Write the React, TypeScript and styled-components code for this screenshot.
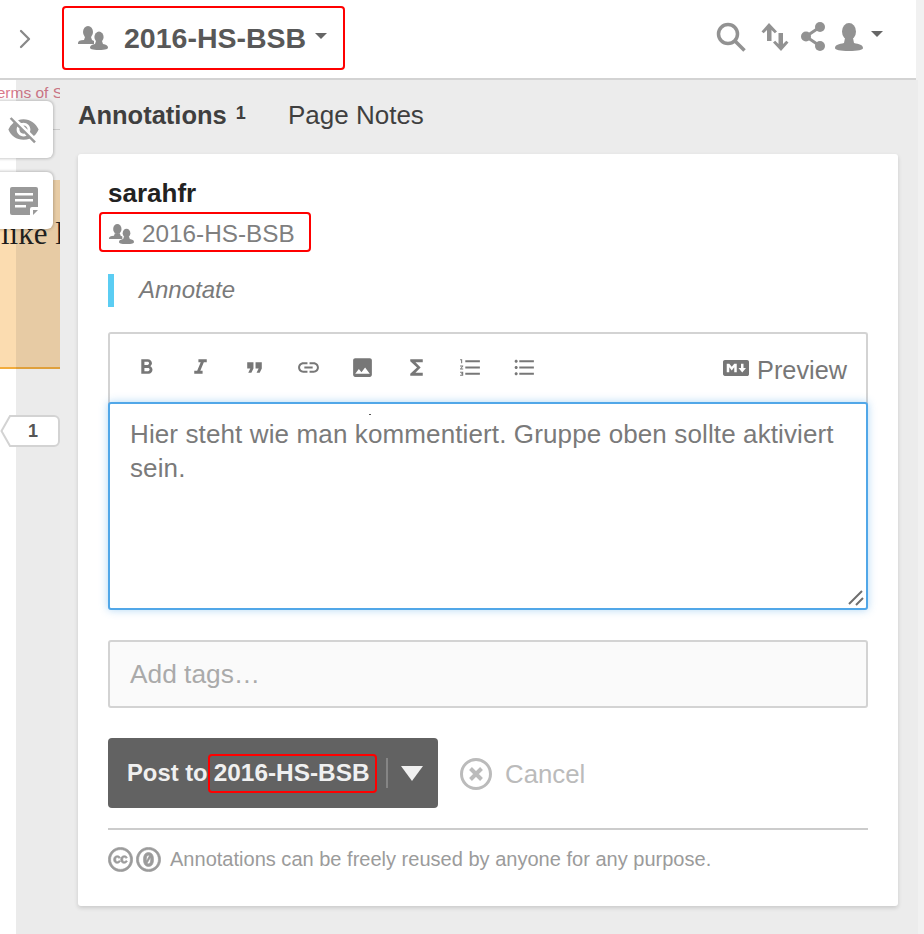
import styled, { createGlobalStyle } from "styled-components";
import {
  MdFormatBold,
  MdFormatItalic,
  MdFormatQuote,
  MdLink,
  MdImage,
  MdFunctions,
  MdFormatListNumbered,
  MdFormatListBulleted,
  MdVisibilityOff,
} from "react-icons/md";
import { FaMarkdown, FaCreativeCommons, FaCreativeCommonsZero } from "react-icons/fa";
import { FiChevronRight } from "react-icons/fi";

const Global = createGlobalStyle`
  html, body { margin: 0; padding: 0; background: #fff; }
  * { box-sizing: border-box; }
  body { font-family: "Liberation Sans", Arial, sans-serif; }
`;

const Page = styled.div`
  width: 924px;
  height: 934px;
  overflow: hidden;
  display: flex;
  flex-direction: column;
  background: #f1f1f1;
`;

const TopBar = styled.div`
  height: 80px;
  width: 916px;
  flex: none;
  background: #fff;
  border-bottom: 2px solid #d3d3d3;
  display: flex;
  align-items: center;
  padding-left: 9px;
`;

const Collapse = styled.div`
  width: 53px;
  display: flex;
  color: #888;
`;

const RedBox = styled.div`
  border: 2px solid #f00;
  border-radius: 4px;
  display: flex;
  align-items: center;
`;

const GroupMenu = styled(RedBox)`
  width: 283px;
  height: 64px;
  margin-top: -2px;
  padding-left: 14px;
  color: #585858;
  font-size: 28.5px;
  font-weight: 700;
  gap: 16px;
`;

const GroupGlyph = styled.span`
  display: flex;
  color: #8c8c8c;
`;

const Caret = styled.span<{ $ml?: number }>`
  width: 0;
  height: 0;
  margin-left: ${(p) => p.$ml || 0}px;
  border-left: 6.5px solid transparent;
  border-right: 6.5px solid transparent;
  border-top: 6px solid #666;
  margin-bottom: 5px;
`;

const TopIcons = styled.div`
  margin-left: auto;
  margin-right: 33px;
  margin-bottom: 5px;
  display: flex;
  align-items: center;
  color: #929292;
`;

const TopIcon = styled.span<{ $ml: number }>`
  display: flex;
  margin-left: ${(p) => p.$ml}px;
`;

const Body = styled.div`
  flex: 1;
  display: flex;
  min-height: 0;
`;

const HostPage = styled.div`
  position: relative;
  width: 60px;
  flex: none;
  overflow: hidden;
  background: #fff;
  font-family: "Liberation Serif", serif;
`;

const Tint = styled.div`
  position: absolute;
  top: 0;
  bottom: 0;
  left: 16px;
  right: 0;
  background: rgba(60, 60, 60, 0.1);
`;

const TermsLine = styled.div`
  height: 50px;
  padding-top: 4px;
  margin-left: -11px;
  white-space: nowrap;
  color: #d97a8c;
  font: 15.5px "Liberation Sans", sans-serif;
  border-bottom: 1px solid #dcdcdc;
`;

const Highlight = styled.div`
  margin-top: 50px;
  height: 189px;
  background: #fbdcb0;
  border-bottom: 2px solid #f2ac3d;
  padding: 34px 0 0 1px;
  font-size: 31px;
  line-height: 40px;
  color: #1c1c1c;
  white-space: nowrap;
`;

const AdderButton = styled.div<{ $top: number }>`
  position: absolute;
  left: -12px;
  top: ${(p) => p.$top}px;
  width: 65px;
  height: 57px;
  background: #fff;
  border-radius: 6px;
  box-shadow: 0 0 3px 1px rgba(0, 0, 0, 0.2);
  display: flex;
  align-items: center;
  justify-content: center;
  padding-left: 6px;
  color: #999;
`;

const Bucket = styled.div`
  position: absolute;
  left: 0;
  top: 335px;
  width: 60px;
  height: 32px;
  color: #555;
  font: 700 18px "Liberation Sans", sans-serif;
  display: flex;
  align-items: center;
  justify-content: center;
  padding-left: 6px;
`;

const BucketShape = styled.svg`
  position: absolute;
  left: 0;
  top: 0;
`;

const BucketCount = styled.span`
  position: relative;
`;

const Sidebar = styled.div`
  width: 858px;
  flex: none;
  background: #ececec;
  padding: 0 20px 0 18px;
`;

const Tabs = styled.div`
  height: 74px;
  display: flex;
  align-items: center;
  color: #3f3f3f;
  font-size: 26px;
  padding-bottom: 4px;
`;

const Tab = styled.div<{ $active?: boolean }>`
  font-weight: ${(p) => (p.$active ? 700 : 400)};
  font-size: ${(p) => (p.$active ? "25.500px" : "26px")};
  width: ${(p) => (p.$active ? "210px" : "auto")};
  display: flex;
`;

const TabCount = styled.sup`
  font-size: 18px;
  line-height: 1;
  margin: 3px 0 0 9px;
`;

const Card = styled.div`
  width: 820px;
  height: 752px;
  background: #fff;
  border-radius: 3px;
  box-shadow: 0 2px 4px rgba(0, 0, 0, 0.15);
  padding: 24px 30px 0;
`;

const User = styled.div`
  font-size: 26px;
  font-weight: 700;
  line-height: 30px;
  color: #222;
`;

const GroupTag = styled(RedBox)`
  width: 212px;
  height: 40px;
  margin: 4px 0 0 -9px;
  padding: 3px 0 0 8px;
  gap: 8px;
  color: #7f7f7f;
  font-size: 24.300px;
`;

const Quote = styled.div`
  margin-top: 22px;
  height: 33px;
  border-left: 6px solid #5bcdf3;
  padding: 0 0 2px 25px;
  display: flex;
  align-items: center;
  color: #7a7a7a;
  font-size: 24px;
  font-style: italic;
`;

const Toolbar = styled.div`
  margin-top: 25px;
  height: 72px;
  border: 2px solid #d3d3d3;
  border-bottom: none;
  border-radius: 3px 3px 0 0;
  display: flex;
  align-items: center;
  padding: 0 19px 3px 9px;
  color: #777;
`;

const ToolButton = styled.div`
  width: 54px;
  display: flex;
  justify-content: center;
  font-size: 25px;
`;

const Preview = styled.div`
  margin-left: auto;
  display: flex;
  align-items: center;
  gap: 8px;
  font-size: 25.300px;
  line-height: 34px;
  color: #777;
`;

const PreviewLabel = styled.span`
  margin-top: 4px;
`;

const Editor = styled.div`
  position: relative;
  margin-top: -2px;
  height: 208px;
  padding: 13px 20px;
  border: 2px solid #51a7e8;
  border-radius: 3px;
  box-shadow: 0 0 8px rgba(81, 167, 232, 0.45);
  background: #fff;
  color: #7a7a7a;
  font-size: 26px;
  letter-spacing: 0.12px;
  line-height: 34px;
`;

const Speck = styled.span`
  position: absolute;
  left: 259px;
  top: 10px;
  width: 2px;
  height: 1px;
  background: #555;
`;

const Grip = styled.svg`
  position: absolute;
  right: 1px;
  bottom: 1px;
`;

const Tags = styled.div`
  margin-top: 30px;
  height: 68px;
  border: 2px solid #d3d3d3;
  border-radius: 3px;
  background: #fafafa;
  color: #aaa;
  font-size: 26.300px;
  display: flex;
  align-items: center;
  padding-left: 20px;
`;

const Actions = styled.div`
  margin-top: 30px;
  display: flex;
  align-items: center;
`;

const PostButton = styled.div`
  width: 330px;
  height: 70px;
  background: #626262;
  border-radius: 4px;
  color: #f0f0f0;
  font-size: 23.800px;
  font-weight: 700;
  display: flex;
  align-items: center;
  padding-left: 19px;
`;

const PostTarget = styled(RedBox)`
  width: 169px;
  height: 39px;
  font-size: 24.400px;
  justify-content: center;
  padding-right: 1px;
`;

const Sep = styled.span`
  width: 2px;
  height: 30px;
  margin-left: 9px;
  background: #858585;
`;

const Drop = styled.span`
  width: 0;
  height: 0;
  margin-left: 13px;
  border-left: 11px solid transparent;
  border-right: 11px solid transparent;
  border-top: 15px solid #f0f0f0;
`;

const Cancel = styled.div`
  margin: 2px 0 0 22px;
  display: flex;
  align-items: center;
  gap: 13px;
  font-size: 25.800px;
  color: #bbb;
`;

const Rule = styled.div`
  margin-top: 20px;
  height: 2px;
  background: #ccc;
`;

const License = styled.div`
  margin-top: 17px;
  display: flex;
  align-items: center;
  color: #9b9b9b;
  font-size: 20.050px;
  gap: 9px;
`;

const LicenseIcons = styled.div`
  display: flex;
  gap: 3px;
  font-size: 25px;

  svg {
    stroke: currentColor;
    stroke-width: 14px;
  }
`;

const GroupIcon = ({ size }: { size: number }) => (
  <svg width={size} height={size * 0.8} viewBox="0 0 30 24" fill="currentColor">
    <ellipse cx="10" cy="6" rx="5" ry="6" />
    <path d="M7 11h6l1 3 2 1v3H0v-1c0-2 2-3 6-3z" />
    <ellipse cx="21" cy="11" rx="4.600" ry="5.400" />
    <path d="M18 15h6l1 3c3 .5 5 1.500 5 3.500 0 1.500-2 2.500-9 2.500s-9-1-9-2.500c0-2 2-3 5-3.500z" />
  </svg>
);

const SearchIcon = () => (
  <svg width="30" height="30" viewBox="0 0 30 30" fill="none" stroke="currentColor">
    <circle cx="12" cy="12" r="9.500" strokeWidth="3.500" />
    <path d="M19 19l9.500 9.500" strokeWidth="3.500" />
  </svg>
);

const SortIcon = () => (
  <svg width="28" height="28" viewBox="0 0 28 28" fill="currentColor">
    <path d="M8 0l8 8.500-2.200 1.800-3.300-3.300V18h-4.500V7L2.700 10.300.5 8.500z" />
    <path d="M20 28l-8-8.500 2.200-1.800 3.300 3.300V10h4.500v11l3.300-3.300 2.200 1.800z" />
  </svg>
);

const ShareIcon = () => (
  <svg width="24" height="29" viewBox="0 0 24 29" fill="currentColor">
    <circle cx="5" cy="14.500" r="5" />
    <circle cx="19" cy="5" r="5" />
    <circle cx="19" cy="24" r="5" />
    <path d="M5 14.500L19 5M5 14.500L19 24" stroke="currentColor" strokeWidth="3" />
  </svg>
);

const UserIcon = () => (
  <svg width="28" height="28" viewBox="0 0 28 28" fill="currentColor">
    <ellipse cx="14" cy="8.500" rx="7" ry="8.500" />
    <path d="M10 15h8l1 5c5 1 9 2 9 5 0 2-5 3-14 3S0 27 0 25c0-3 4-4 9-5z" />
  </svg>
);

const NoteIcon = () => (
  <svg width="28" height="28" viewBox="0 0 28 28" fill="currentColor">
    <path
      fillRule="evenodd"
      d="M2 0h24a2 2 0 0 1 2 2v18h-6a2 2 0 0 0-2 2v6H2a2 2 0 0 1-2-2V2a2 2 0 0 1 2-2zM5 6v2.500h18V6zM5 12v2.500h18V12zM5 18v2.500h11V18zM23 23h5l-5 5z"
    />
  </svg>
);

const CancelIcon = () => (
  <svg width="32" height="32" viewBox="0 0 32 32" fill="none" stroke="currentColor">
    <circle cx="16" cy="16" r="14.500" strokeWidth="3" />
    <path d="M10.500 10.500l11 11M21.500 10.500l-11 11" strokeWidth="4" />
  </svg>
);

export default function App() {
  return (
    <Page>
      <Global />
      <TopBar>
        <Collapse>
          <FiChevronRight size={32} strokeWidth={1.7} />
        </Collapse>
        <GroupMenu>
          <GroupGlyph>
            <GroupIcon size={30} />
          </GroupGlyph>
          <span>2016-HS-BSB</span>
          <Caret $ml={-7} />
        </GroupMenu>
        <TopIcons>
          <TopIcon $ml={0}><SearchIcon /></TopIcon>
          <TopIcon $ml={15}><SortIcon /></TopIcon>
          <TopIcon $ml={12}><ShareIcon /></TopIcon>
          <TopIcon $ml={10}><UserIcon /></TopIcon>
          <Caret $ml={8} />
        </TopIcons>
      </TopBar>
      <Body>
        <HostPage>
          <TermsLine>Terms of S</TermsLine>
          <Highlight>like l</Highlight>
          <Tint />
          <AdderButton $top={21}>
            <MdVisibilityOff size={33} />
          </AdderButton>
          <AdderButton $top={92}>
            <NoteIcon />
          </AdderButton>
          <Bucket>
            <BucketShape width="60" height="32" viewBox="0 0 60 32">
              <path
                d="M1.500 16L10 1h44a5 5 0 0 1 5 5v20a5 5 0 0 1-5 5H10z"
                fill="#fff"
                stroke="#d3d3d3"
                strokeWidth="2"
              />
            </BucketShape>
            <BucketCount>1</BucketCount>
          </Bucket>
        </HostPage>
        <Sidebar>
          <Tabs>
            <Tab $active>
              Annotations<TabCount>1</TabCount>
            </Tab>
            <Tab>Page Notes</Tab>
          </Tabs>
          <Card>
            <User>sarahfr</User>
            <GroupTag>
              <GroupGlyph>
                <GroupIcon size={25} />
              </GroupGlyph>
              <span>2016-HS-BSB</span>
            </GroupTag>
            <Quote>Annotate</Quote>
            <Toolbar>
              <ToolButton><MdFormatBold /></ToolButton>
              <ToolButton><MdFormatItalic /></ToolButton>
              <ToolButton><MdFormatQuote /></ToolButton>
              <ToolButton><MdLink /></ToolButton>
              <ToolButton><MdImage /></ToolButton>
              <ToolButton><MdFunctions /></ToolButton>
              <ToolButton><MdFormatListNumbered /></ToolButton>
              <ToolButton><MdFormatListBulleted /></ToolButton>
              <Preview>
                <FaMarkdown size={26} />
                <PreviewLabel>Preview</PreviewLabel>
              </Preview>
            </Toolbar>
            <Editor>
              <Speck />
              Hier steht wie man kommentiert. Gruppe oben sollte aktiviert sein.
              <Grip width="18" height="18" viewBox="0 0 18 18" stroke="#6f6f6f" strokeWidth="2">
                <path d="M2 15L15 2M9 16l7-7" />
              </Grip>
            </Editor>
            <Tags>Add tags…</Tags>
            <Actions>
              <PostButton>
                Post to
                <PostTarget>2016-HS-BSB</PostTarget>
                <Sep />
                <Drop />
              </PostButton>
              <Cancel>
                <CancelIcon />
                Cancel
              </Cancel>
            </Actions>
            <Rule />
            <License>
              <LicenseIcons>
                <FaCreativeCommons />
                <FaCreativeCommonsZero />
              </LicenseIcons>
              Annotations can be freely reused by anyone for any purpose.
            </License>
          </Card>
        </Sidebar>
      </Body>
    </Page>
  );
}
